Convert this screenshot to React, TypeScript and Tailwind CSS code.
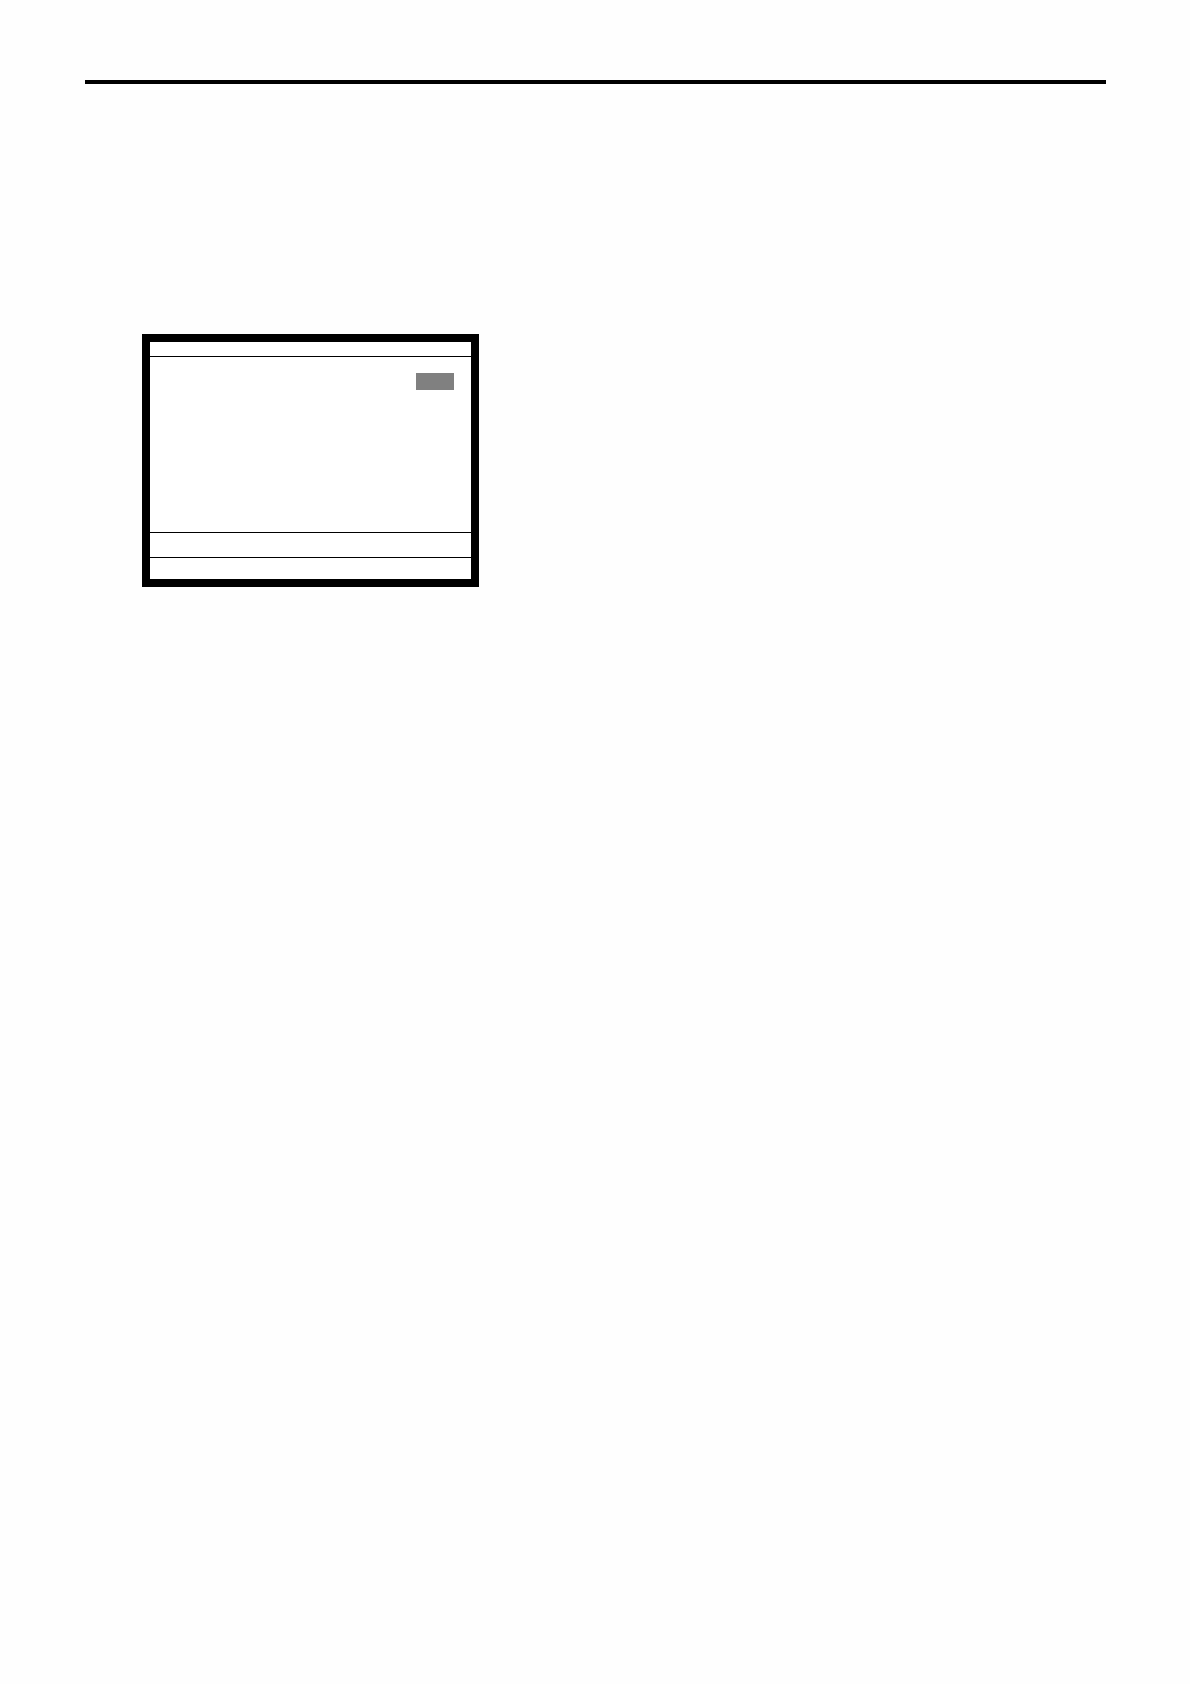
const Screen = () => {
  return (
      <section className="w-[337px] max-w-full flex flex-col border-8 border-black bg-white">
        <div className="h-[15px] border-b border-black" />
        <div className="h-[176px] border-b border-black pt-4 pr-[17px] flex justify-end items-start">
          <div className="w-[38px] h-[17px] bg-[#808080]" />
        </div>
        <div className="h-[25px] border-b border-black" />
        <div className="h-[21px]" />
      </section>
  );
};

const App = () => {
  return (
      <div className="min-h-screen bg-[#fefefe] pt-20 pl-[85px] pr-[84px]">
        <hr className="border-t-4 border-black" />
        <main className="pt-[250px] pl-[57px]">
          <Screen />
        </main>
      </div>
  );
};

export default App
